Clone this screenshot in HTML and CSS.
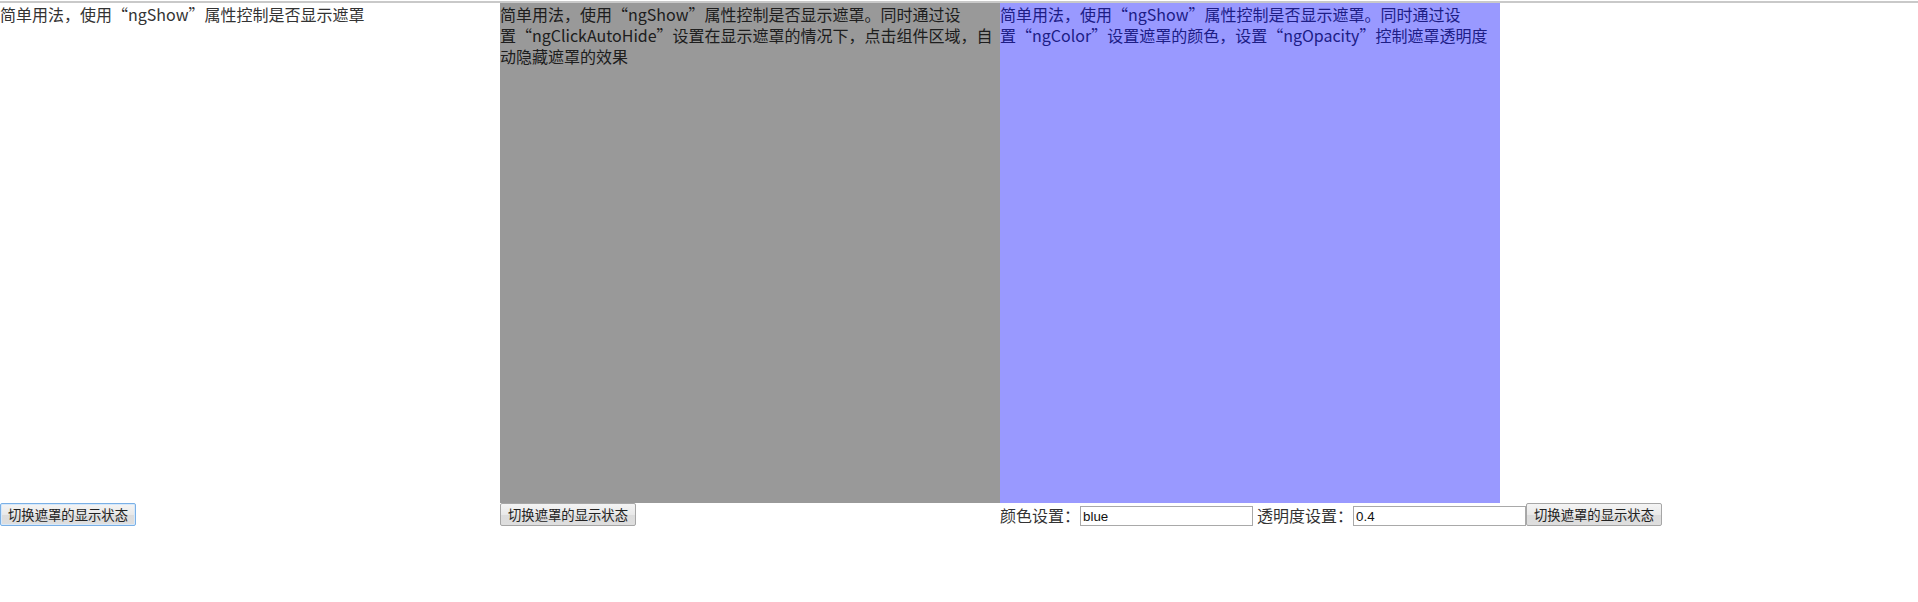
FILE: index.html
```html
<!DOCTYPE html>
<html lang="zh-CN">
<head>
<meta charset="utf-8">
<title>遮罩组件示例</title>
<link rel="stylesheet" href="styles.css">
</head>
<body>
<div class="page">
  <div class="demo">
    <div class="panel">
      <div class="desc">简单用法，使用“ngShow”属性控制是否显示遮罩</div>
    </div>
    <div class="controls">
      <button class="btn btn-focus" type="button">切换遮罩的显示状态</button>
    </div>
  </div>
  <div class="demo">
    <div class="panel">
      <div class="desc">简单用法，使用“ngShow”属性控制是否显示遮罩。同时通过设置&#8288;“ngClickAutoHide”设置在显示遮罩的情况下，点击组件区域，自动隐藏遮罩的效果</div>
      <div class="mask mask-gray"></div>
    </div>
    <div class="controls">
      <button class="btn" type="button">切换遮罩的显示状态</button>
    </div>
  </div>
  <div class="demo">
    <div class="panel">
      <div class="desc">简单用法，使用“ngShow”属性控制是否显示遮罩。同时通过设置&#8288;“ngColor”设置遮罩的颜色，设置“ngOpacity”控制遮罩透明度</div>
      <div class="mask mask-blue"></div>
    </div>
    <div class="controls">
      <label class="field-label">颜色设置：</label><input class="field" type="text" value="blue"><span class="sp"></span><label class="field-label">透明度设置：</label><input class="field" type="text" value="0.4"><button class="btn" type="button">切换遮罩的显示状态</button>
    </div>
  </div>
</div>
</body>
</html>
```

FILE: styles.css
```css
html, body {
  margin: 0;
  padding: 0;
  background: #fff;
}

body {
  padding-top: 1px;
  font-family: "Noto Sans CJK SC", "Noto Sans", sans-serif;
  font-size: 16px;
  line-height: 21px;
  color: #333;
}

.page {
  border-top: 2px solid #c9c9c9;
  display: flex;
  align-items: flex-start;
}

.demo {
  display: flex;
  flex-direction: column;
  flex: none;
}

.panel {
  position: relative;
  width: 500px;
  height: 500px;
  overflow: hidden;
}

.desc {
  padding-top: 1px;
}

.mask {
  position: absolute;
  left: 0;
  top: 0;
  right: 0;
  bottom: 0;
}

.mask-gray {
  background: #000;
  opacity: 0.4;
}

.mask-blue {
  background: #0000ff;
  opacity: 0.4;
}

.controls {
  display: flex;
  align-items: flex-end;
  height: 23px;
  white-space: nowrap;
}

.btn {
  box-sizing: border-box;
  height: 23px;
  width: 136px;
  margin: 0;
  padding: 0 5px;
  font-family: "Noto Sans CJK SC", sans-serif;
  font-size: 13.33px;
  line-height: 19px;
  color: #222;
  border: 1px solid #a6a6a6;
  border-radius: 2px;
  background: linear-gradient(#f4f4f4, #e9e9e9 50%, #dcdcdc 51%, #dedede);
}

.btn-focus {
  border-color: #7ab0e6;
  box-shadow: inset 0 0 0 1px #d6e8fa;
}

.field-label {
  font-size: 16px;
  line-height: 22px;
  color: #333;
}

.field {
  box-sizing: border-box;
  width: 173px;
  height: 20px;
  margin: 0;
  padding: 1px 2px;
  font-family: "Liberation Sans", Arial, sans-serif;
  font-size: 13.33px;
  color: #111;
  border: 1px solid #a9a9a9;
  background: #fff;
}

.sp {
  display: inline-block;
  width: 4px;
}
```
